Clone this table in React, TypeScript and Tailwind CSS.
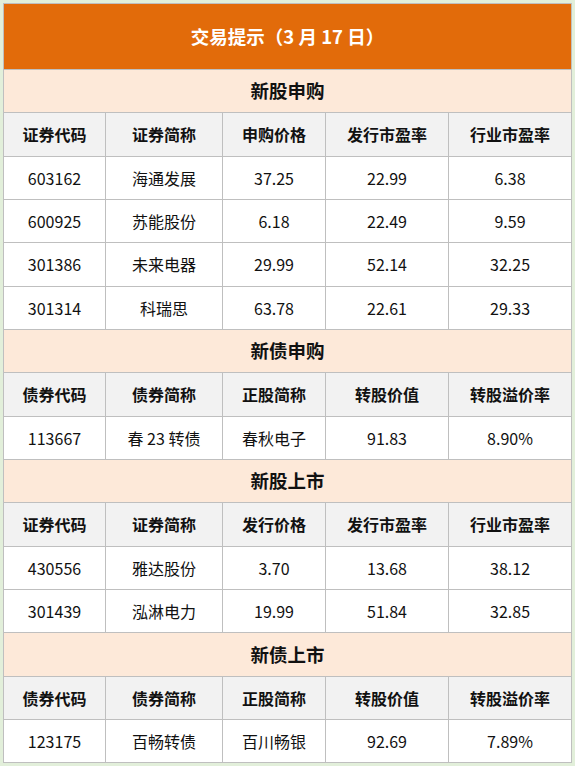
import React from "react";

type Section = {
  title: string;
  headers: string[];
  rows: string[][];
};

const sections: Section[] = [
  {
    title: "新股申购",
    headers: ["证券代码", "证券简称", "申购价格", "发行市盈率", "行业市盈率"],
    rows: [
      ["603162", "海通发展", "37.25", "22.99", "6.38"],
      ["600925", "苏能股份", "6.18", "22.49", "9.59"],
      ["301386", "未来电器", "29.99", "52.14", "32.25"],
      ["301314", "科瑞思", "63.78", "22.61", "29.33"],
    ],
  },
  {
    title: "新债申购",
    headers: ["债券代码", "债券简称", "正股简称", "转股价值", "转股溢价率"],
    rows: [["113667", "春 23 转债", "春秋电子", "91.83", "8.90%"]],
  },
  {
    title: "新股上市",
    headers: ["证券代码", "证券简称", "发行价格", "发行市盈率", "行业市盈率"],
    rows: [
      ["430556", "雅达股份", "3.70", "13.68", "38.12"],
      ["301439", "泓淋电力", "19.99", "51.84", "32.85"],
    ],
  },
  {
    title: "新债上市",
    headers: ["债券代码", "债券简称", "正股简称", "转股价值", "转股溢价率"],
    rows: [["123175", "百畅转债", "百川畅银", "92.69", "7.89%"]],
  },
];

const font = {
  fontFamily: '"Microsoft YaHei", "Noto Sans CJK SC", "Noto Sans", sans-serif',
};

export default function App() {
  return (
    <div className="w-[575px] h-[766px] bg-[#e2efda] pt-[3px] pl-[3px]" style={font}>
      <table className="w-[568px] table-fixed border-collapse border border-[#bfbfbf] text-[#111]">
        <colgroup>
          <col className="w-[102px]" />
          <col className="w-[117px]" />
          <col className="w-[103px]" />
          <col className="w-[123px]" />
          <col className="w-[123px]" />
        </colgroup>
        <tbody>
          <tr className="h-[66px]">
            <td
              colSpan={5}
              className="bg-[#e26b0a] text-white text-center font-bold text-[18.5px] border border-[#bfbfbf]"
            >
              交易提示（3 月 17 日）
            </td>
          </tr>
          {sections.map((s) => (
            <React.Fragment key={s.title}>
              <tr className="h-[43.33px]">
                <td
                  colSpan={5}
                  className="bg-[#fde9d9] text-center font-bold text-[18.5px] border border-[#bfbfbf]"
                >
                  {s.title}
                </td>
              </tr>
              <tr className="h-[43.33px]">
                {s.headers.map((h) => (
                  <td
                    key={h}
                    className="bg-[#f2f2f2] text-center font-bold text-[16px] border border-[#bfbfbf]"
                  >
                    {h}
                  </td>
                ))}
              </tr>
              {s.rows.map((r) => (
                <tr key={r[0]} className="h-[43.33px]">
                  {r.map((c, i) => (
                    <td
                      key={i}
                      className="bg-white text-center text-[16px] border border-[#bfbfbf]"
                    >
                      {c}
                    </td>
                  ))}
                </tr>
              ))}
            </React.Fragment>
          ))}
        </tbody>
      </table>
    </div>
  );
}
